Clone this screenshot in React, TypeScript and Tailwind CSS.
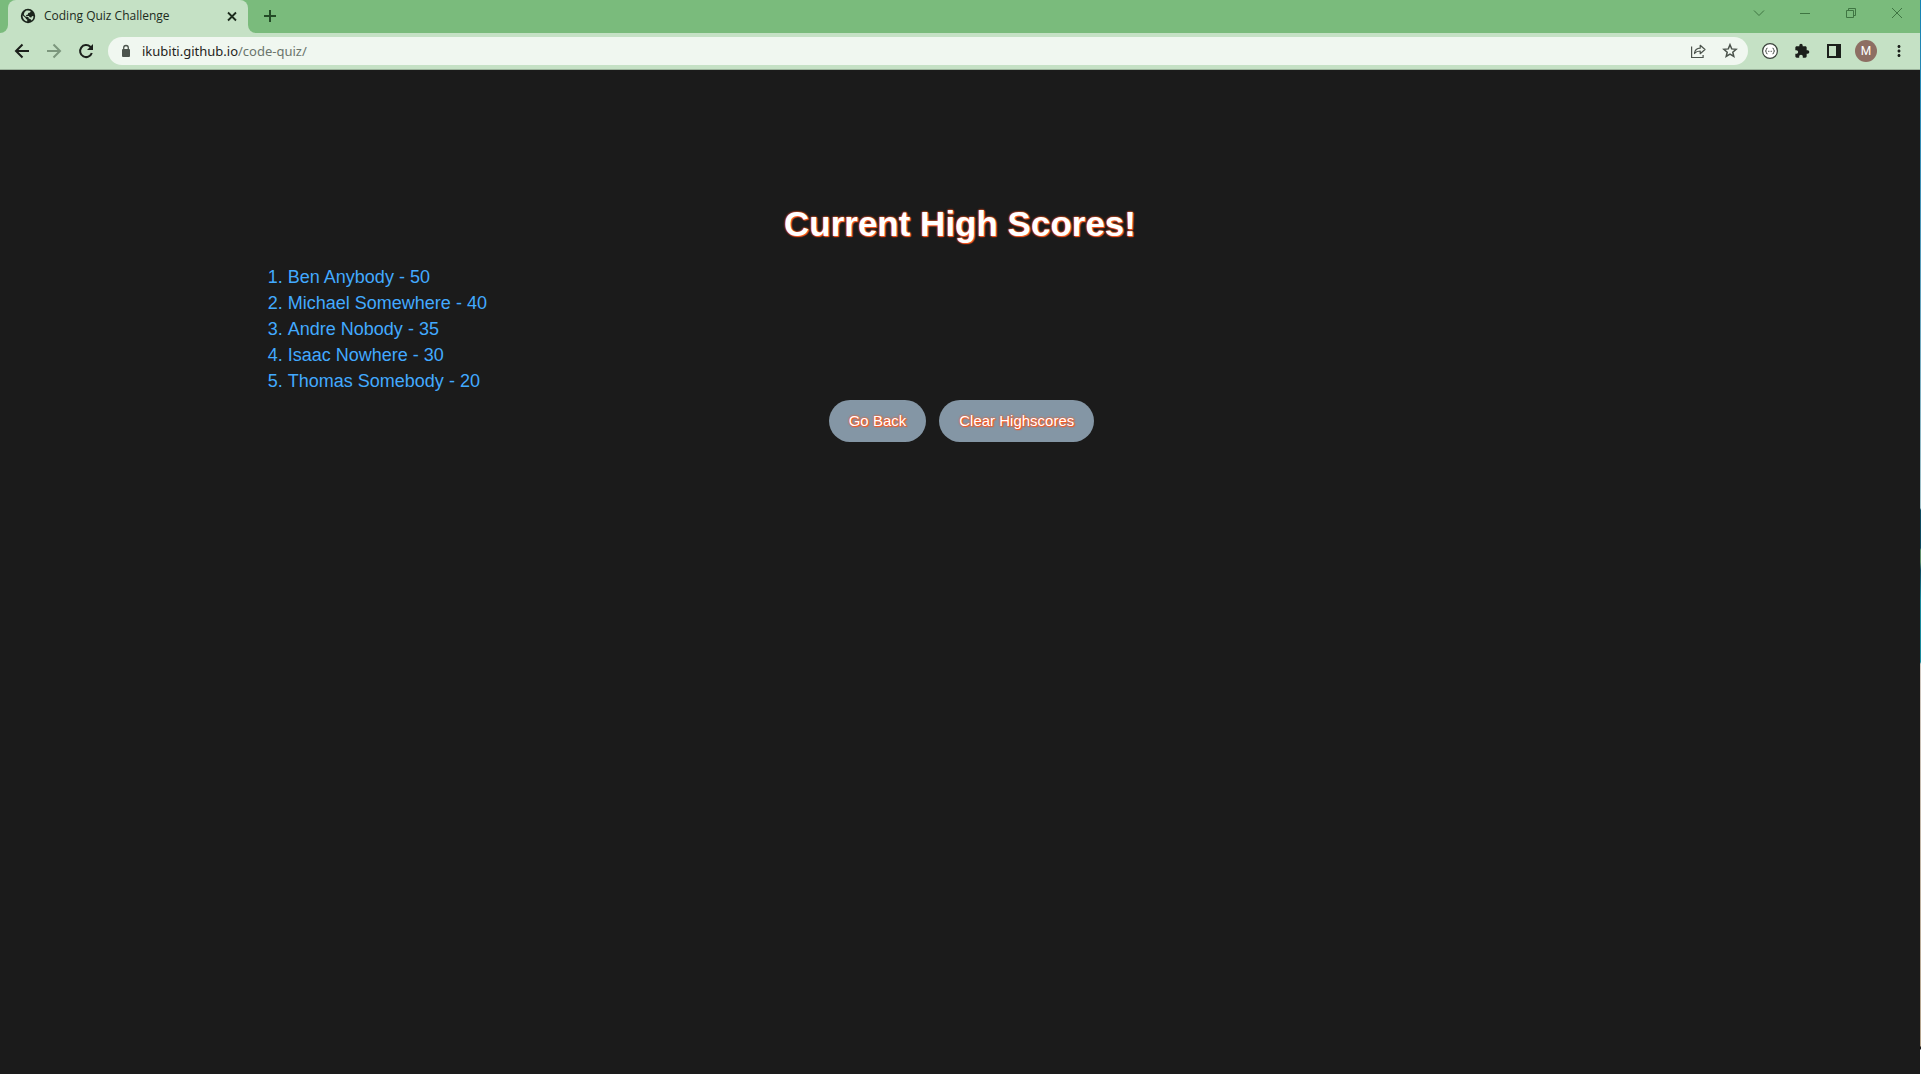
import { MdExtension, MdMoreVert } from "react-icons/md";

const scores = [
  { name: "Ben Anybody", score: 50 },
  { name: "Michael Somewhere", score: 40 },
  { name: "Andre Nobody", score: 35 },
  { name: "Isaac Nowhere", score: 30 },
  { name: "Thomas Somebody", score: 20 },
];

function TabStrip() {
  return (
    <div className="flex h-[33px] items-start bg-[#7abb7c] text-[#234a26]">
      <div className="h-[33px] w-2 shrink-0 bg-[#c5e1c5]">
        <div className="h-[33px] w-2 rounded-br-lg bg-[#7abb7c]" />
      </div>
      <div className="flex h-[33px] w-60 items-center rounded-t-lg bg-[#c5e1c5] pr-2 pb-px pl-3 text-[#1c2b1d]">
        <svg className="size-4" viewBox="0 0 16 16">
          <circle cx="8" cy="8" r="7.200" fill="#1a241b" />
          <path
            d="M2.600 7.200 5.600 10c.3.300.2 1 .8 1.200l.8.300v2.100A5.800 5.800 0 0 1 2.600 7.200zM6.500 2.600c1.600-.4 3-.2 4.200.5l-.6 1.500-1.900.4-.3 1.500-1.600.4-.3 1 2.900.1.900 1.300 1.500.2.600-1.300 1.500-.3c.2 1.800-.5 3.300-1.700 4.500l-1.400-1.500-1.600-.3-.3-1.600-3-.4-1.600-1.900c.3-1.900 1.200-3.400 2.700-4.100z"
            fill="#c5e1c5"
          />
        </svg>
        <span className="ml-2 flex-1 text-[12px] leading-4">Coding Quiz Challenge</span>
        <button aria-label="Close tab" className="size-4">
          <svg viewBox="0 0 16 16" fill="none" stroke="currentColor" strokeWidth="1.800"><path d="M4 4.500 12 12.500M12 4.500 4 12.500" /></svg>
        </button>
      </div>
      <div className="h-[33px] w-2 shrink-0 bg-[#c5e1c5]">
        <div className="h-[33px] w-2 rounded-bl-lg bg-[#7abb7c]" />
      </div>
      <button aria-label="New tab" className="mt-2 ml-[6px] size-4">
        <svg viewBox="0 0 16 16" fill="none" stroke="currentColor" strokeWidth="2"><path d="M8 2V14M2 8H14" /></svg>
      </button>
      <div className="ml-auto flex h-[26px] items-center gap-[30px] pr-[15px]">
        <button aria-label="Search tabs" className="size-4">
          <svg viewBox="0 0 16 16" fill="none" stroke="#3f7542"><path d="M3 5.500 8 10.500 13 5.500" /></svg>
        </button>
        <button aria-label="Minimize" className="size-4">
          <svg viewBox="0 0 16 16" fill="none" stroke="#3f7542"><path d="M3 8.500H13" /></svg>
        </button>
        <button aria-label="Restore" className="size-4">
          <svg viewBox="0 0 16 16" fill="none" stroke="#3f7542"><path d="M3.500 5.500h7v7h-7zM5.500 5.500V3.500h7v7h-2" /></svg>
        </button>
        <button aria-label="Close window" className="size-4">
          <svg viewBox="0 0 16 16" fill="none" stroke="#3f7542"><path d="M3 3 13 13M13 3 3 13" /></svg>
        </button>
      </div>
    </div>
  );
}

function Toolbar() {
  return (
    <div className="flex h-[37px] items-center border-b border-[#9bb29b] bg-[#c5e1c5] text-[#1b1f1b]">
      <div className="flex items-center gap-3 pl-3">
        <button aria-label="Back" className="size-5">
          <svg viewBox="0 0 20 20" fill="none" stroke="currentColor" strokeWidth="2"><path d="M17 10H4M10.500 3.500 4 10 10.500 16.500" /></svg>
        </button>
        <button aria-label="Forward" className="size-5 text-[#7c977d]">
          <svg viewBox="0 0 20 20" fill="none" stroke="currentColor" strokeWidth="2"><path d="M3 10H16M9.500 3.500 16 10 9.500 16.500" /></svg>
        </button>
        <button aria-label="Reload" className="size-5">
          <svg viewBox="0 0 20 20" fill="none" stroke="currentColor" strokeWidth="2"><path d="M15.800 12A6 6 0 1 1 14.300 5.800L16 7.500" /><path d="M17 3v6h-6z" fill="currentColor" stroke="none" /></svg>
        </button>
      </div>
      <div className="ml-3 flex h-7 flex-1 items-center rounded-full bg-[#f0f7f0] pr-[9px] pl-[11px] text-[#4b534c]">
        <svg className="size-[14px]" viewBox="0 0 14 14">
          <rect x="3" y="5" width="8" height="8" rx="1" fill="currentColor" />
          <path d="M4.700 5.500V3.800a2.300 2.300 0 0 1 4.600 0v1.700" fill="none" stroke="currentColor" strokeWidth="1.300" />
        </svg>
        <div className="ml-[9px] flex-1 font-['Noto_Sans',sans-serif] text-[13px] leading-5 text-[#6b756c]">
          <span className="text-[#1f2420]">ikubiti.github.io</span>/code-quiz/
        </div>
        <button aria-label="Share">
          <svg className="size-4" viewBox="0 0 16 16" fill="none" stroke="currentColor" strokeWidth="1.200"><path d="M1.600 3.500v11h11.500V12" /><path d="M4.500 10.500c.4-3.600 2.600-5.200 5.700-5.300V2.300L15 6.500l-4.800 4.200V8c-2.500 0-4.300.7-5.700 2.500z" strokeLinejoin="round" /></svg>
        </button>
        <button aria-label="Bookmark" className="ml-[15px]">
          <svg className="size-[18px]" viewBox="0 0 18 18" fill="none" stroke="currentColor" strokeWidth="1.500"><path d="M9 2.800 10.700 6.900 15.100 7.300 11.800 10.200 12.800 14.500 9 12.200 5.200 14.500 6.200 10.200 2.900 7.300 7.300 6.900z" /></svg>
        </button>
      </div>
      <div className="flex items-center gap-4 pr-3 pl-[14px]">
        <button aria-label="JSON viewer">
          <svg className="size-4" viewBox="0 0 16 16"><circle cx="8" cy="8" r="7.400" fill="#fff" stroke="#3c443d" strokeWidth="1.200" /><path d="M5.500 5.200c-1 0-1.200.4-1.200 1.200s0 1.300-1 1.600c1 .3 1 .8 1 1.600s.2 1.200 1.200 1.200M10.500 5.200c1 0 1.200.4 1.200 1.200s0 1.300 1 1.600c-1 .3-1 .8-1 1.600s-.2 1.200-1.200 1.200M6.200 8.300h1.200M8.600 8.300h1.200" fill="none" stroke="#3c443d" /></svg>
        </button>
        <button aria-label="Extensions"><MdExtension className="size-4" /></button>
        <button aria-label="Side panel">
          <svg className="size-4" viewBox="0 0 16 16"><path fill="currentColor" fillRule="evenodd" d="M1 1h14v14H1zM3 3v10h7V3z" /></svg>
        </button>
        <button aria-label="Profile" className="-mx-[3px] flex size-[22px] items-center justify-center rounded-full bg-[#8d6e63] font-['Roboto',sans-serif] text-[12px] text-white">M</button>
        <button aria-label="Menu"><MdMoreVert className="size-[18px]" /></button>
      </div>
    </div>
  );
}

function QuizButton({ label }: { label: string }) {
  return (
    <button className="rounded-full bg-[#8496a5] px-5 py-[10px] text-[15px] leading-[22px] text-white [text-shadow:0_0_2px_#ff5722,0_0_2px_#ff5722,1px_1px_1px_#ff5722]">
      {label}
    </button>
  );
}

export default function App() {
  return (
    <div className="flex min-h-screen bg-[#1b1b1b]">
      <div className="flex min-w-0 flex-1 flex-col">
        <header className="font-['Open_Sans',sans-serif]">
          <TabStrip />
          <Toolbar />
        </header>
        <main className="mx-auto w-[72%] pt-32 font-['Liberation_Sans',Arial,sans-serif]">
          <h1 className="text-center text-[35px] leading-[52px] font-bold text-white [text-shadow:0_0_2px_#ff5722,0_0_2px_#ff5722,1px_1px_1px_#ff5722]">
            Current High Scores!
          </h1>
          <ol className="mt-[14px] list-decimal pl-[19px] text-[18px] leading-[26px] text-[#42aaff]">
            {scores.map((s) => (
              <li key={s.name}>{s.name} - {s.score}</li>
            ))}
          </ol>
          <div className="mt-[6px] flex justify-center gap-[13px] pl-[3px]">
            <QuizButton label="Go Back" />
            <QuizButton label="Clear Highscores" />
          </div>
        </main>
      </div>
      <div className="w-px bg-[linear-gradient(to_bottom,#1482b4_0,#3f8fb4_180px,#a3c3ca_508px,#0d4a60_510px,#0d4a60_548px,#5c8f6a_550px,#5c8f6a_562px,#0d4a60_570px,#1a8a9c_600px,#1a8a9c_662px,#d0c8c0_664px,#b5a48c_1046px,#1b1b1b_1047px,#1b1b1b_1049px,#ffffff_1050px)]" />
    </div>
  );
}
